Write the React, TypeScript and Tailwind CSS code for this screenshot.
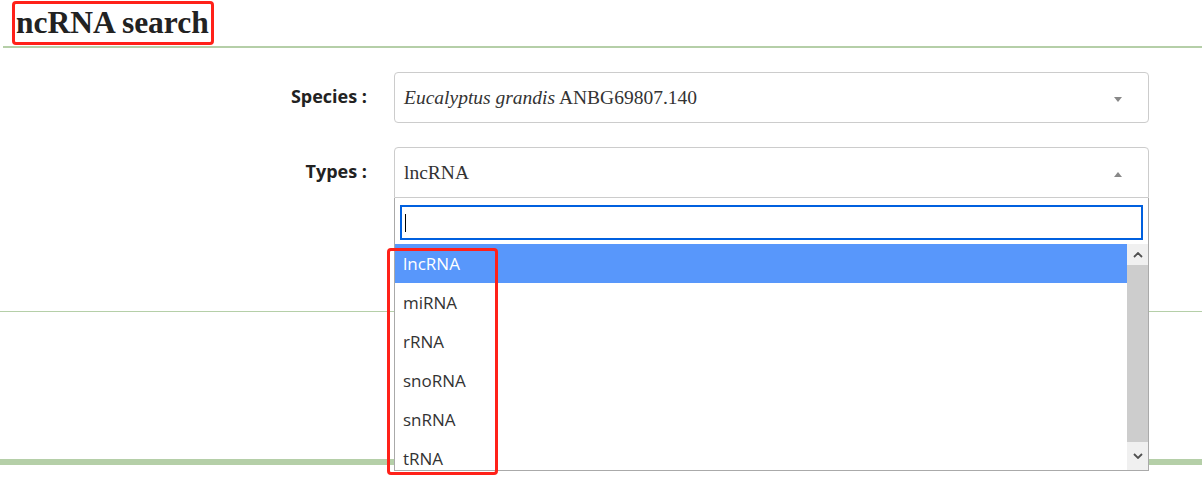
import React from "react";

const options = ["lncRNA", "miRNA", "rRNA", "snoRNA", "snRNA", "tRNA"];

function Chevron({ up }: { up?: boolean }) {
  return (
    <svg width="10" height="6" viewBox="0 0 10 6" className="block">
      <path
        d={up ? "M1 5 L5 1 L9 5" : "M1 1 L5 5 L9 1"}
        fill="none"
        stroke="#505050"
        strokeWidth="1.8"
      />
    </svg>
  );
}

export default function App() {
  return (
    <div className="relative w-[1202px] h-[477px] bg-white overflow-hidden font-['Open_Sans',sans-serif]">
      {/* header */}
      <div className="ml-[3px] h-[48px] border-b-2 border-[#b5cfa8] pl-[9px] pt-[1px]">
        <h1 className="inline-block border-[3px] border-[#ff2119] rounded-[4px] h-[44px] pl-[1px] pr-[2px] font-['Liberation_Serif',serif] font-bold text-[31.5px] leading-[38px] text-[#222]">
          ncRNA search
        </h1>
      </div>

      {/* form */}
      <div className="flex flex-col gap-[24px] pt-[24px]">
        <div className="flex items-center">
          <div className="w-[367px] text-right font-bold text-[18px] text-[#222] leading-[22px] -mt-[3px]">
            Species :
          </div>
          <div className="ml-[27px] w-[755px] h-[51px] border border-[#ccc] rounded-[4px] flex items-center pl-[9px] pr-[26px] font-['Liberation_Serif',serif] text-[19.5px] text-[#333]">
            <span className="flex-1">
              <i>Eucalyptus grandis</i> ANBG69807.140
            </span>
            <span className="w-0 h-0 border-l-[4px] border-r-[4px] border-t-[5px] border-l-transparent border-r-transparent border-t-[#888] mt-[3px]" />
          </div>
        </div>

        <div className="flex items-center">
          <div className="w-[367px] text-right font-bold text-[18px] text-[#222] leading-[22px] -mt-[3px]">
            Types :
          </div>
          <div className="relative ml-[27px] w-[755px] h-[51px] border border-[#ccc] rounded-t-[4px] flex items-center pl-[9px] pr-[26px] font-['Liberation_Serif',serif] text-[19.5px] text-[#333]">
            <span className="flex-1">lncRNA</span>
            <span className="w-0 h-0 border-l-[4px] border-r-[4px] border-b-[5px] border-l-transparent border-r-transparent border-b-[#888] mt-[3px]" />

            {/* dropdown */}
            <div className="absolute left-[-1px] top-[50px] w-[755px] h-[273px] bg-white border border-[#aaa] border-t-0 z-10 flex flex-col font-['Open_Sans',sans-serif]">
              <div className="px-[5px] pt-[7px] pb-[4px]">
                <div className="h-[35px] border-2 border-[#0060df] flex items-center pl-[3px]">
                  <span className="w-[1px] h-[18px] bg-black" />
                </div>
              </div>
              <div className="flex flex-1 min-h-0">
                <ul className="flex-1 overflow-hidden">
                  {options.map((o, i) => (
                    <li
                      key={o}
                      className={
                        i === 0
                          ? "h-[39px] flex items-center pl-[8px] text-[17px] bg-[#5897fb] text-white"
                          : "h-[39px] flex items-center pl-[8px] text-[17px] text-[#333]"
                      }
                    >
                      {o}
                    </li>
                  ))}
                </ul>
                <div className="w-[21px] bg-[#f0f0f0] flex flex-col">
                  <div className="h-[21px] flex items-center justify-center">
                    <Chevron up />
                  </div>
                  <div className="flex-1 bg-[#cdcdcd]" />
                  <div className="h-[28px] flex items-center justify-center">
                    <Chevron />
                  </div>
                </div>
              </div>
            </div>
          </div>
        </div>
      </div>

      <div className="mt-[113px] h-[1px] bg-[#b5cfa8]" />
      <div className="mt-[147px] h-[6px] bg-[#b5cfa8]" />

      {/* annotation box around options */}
      <div className="absolute left-[387px] top-[248px] w-[111px] h-[227px] border-[3px] border-[#ff2119] rounded-[4px] z-20" />
    </div>
  );
}
